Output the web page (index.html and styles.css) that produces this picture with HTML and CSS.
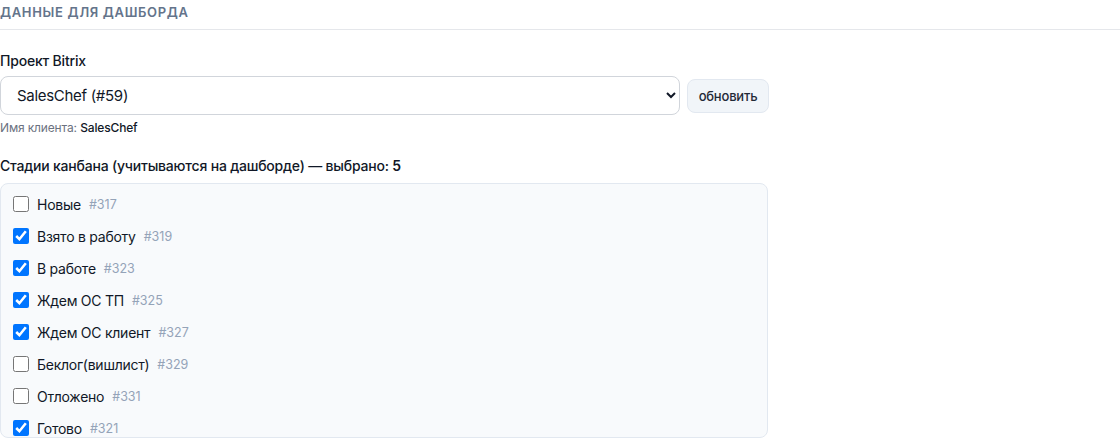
FILE: index.html
```html
<!DOCTYPE html>
<html lang="ru">
<head>
  <meta charset="UTF-8">
  <title>Данные для дашборда</title>
  <link rel="stylesheet" href="styles.css">
</head>
<body>
  <div class="section-title">Данные для дашборда</div>

  <div class="field">
    <label class="field-label" for="project">Проект Bitrix</label>
    <div class="project-row">
      <select id="project" class="project-select">
        <option>SalesChef (#59)</option>
      </select>
      <button class="btn-refresh">обновить</button>
    </div>
    <div class="hint">Имя клиента: <b>SalesChef</b></div>
  </div>

  <div class="field">
    <div class="field-label">Стадии канбана (учитываются на дашборде) — выбрано: <b>5</b></div>
    <div class="stages">
      <label class="stage"><input type="checkbox"> Новые <span class="stage-id">#317</span></label>
      <label class="stage"><input type="checkbox" checked> Взято в работу <span class="stage-id">#319</span></label>
      <label class="stage"><input type="checkbox" checked> В работе <span class="stage-id">#323</span></label>
      <label class="stage"><input type="checkbox" checked> Ждем ОС ТП <span class="stage-id">#325</span></label>
      <label class="stage"><input type="checkbox" checked> Ждем ОС клиент <span class="stage-id">#327</span></label>
      <label class="stage"><input type="checkbox"> Беклог(вишлист) <span class="stage-id">#329</span></label>
      <label class="stage"><input type="checkbox"> Отложено <span class="stage-id">#331</span></label>
      <label class="stage"><input type="checkbox" checked> Готово <span class="stage-id">#321</span></label>
    </div>
  </div>
</body>
</html>
```

FILE: styles.css
```css
body {
  margin: 0;
  font-family: Inter, "Noto Sans", sans-serif;
  color: #111827;
  background: #fff;
}
.section-title {
  padding: 4px 0 9px;
  border-bottom: 1px solid #e5e7eb;
  font-size: 13px;
  line-height: 16px;
  font-weight: 600;
  letter-spacing: 0.05em;
  text-transform: uppercase;
  color: #64748b;
}
.field {
  width: 769px;
}
.field-label {
  display: block;
  margin-top: 21px;
  font-size: 14px;
  line-height: 20px;
  font-weight: 500;
  letter-spacing: -0.2px;
  color: #111827;
}
.field-label b {
  font-weight: 600;
}
.project-row {
  display: flex;
  align-items: center;
  gap: 7px;
  margin-top: 5px;
}
.project-select {
  width: 680px;
  height: 39px;
  padding: 0 10px 0 12px;
  border: 1px solid #d1d5db;
  border-radius: 8px;
  background: #fff;
  font-family: inherit;
  font-size: 15px;
  letter-spacing: -0.3px;
  color: #111827;
}
.btn-refresh {
  width: 82px;
  height: 34px;
  padding: 0;
  border: 1px solid #e2e8f0;
  border-radius: 8px;
  background: #f1f5f9;
  font-family: inherit;
  font-size: 13px;
  font-weight: 500;
  letter-spacing: -0.2px;
  color: #1f2937;
  cursor: pointer;
}
.hint {
  margin-top: 5px;
  font-size: 12px;
  line-height: 16px;
  letter-spacing: -0.15px;
  color: #6b7280;
}
.hint b {
  font-weight: 500;
  color: #111827;
}
.field + .field .field-label {
  margin-top: 20px;
}
.stages {
  box-sizing: border-box;
  width: 768px;
  height: 255px;
  margin-top: 7px;
  padding: 4px 12px;
  border: 1px solid #e2e8f0;
  border-radius: 8px;
  background: #f8fafc;
  overflow: hidden;
}
.stage {
  display: flex;
  align-items: center;
  gap: 8px;
  height: 32px;
  font-size: 14px;
  letter-spacing: -0.25px;
  color: #111827;
}
.stage input {
  width: 16px;
  height: 16px;
  margin: 0;
}
.stage-id {
  font-size: 12.5px;
  letter-spacing: 0;
  color: #94a3b8;
}
```
